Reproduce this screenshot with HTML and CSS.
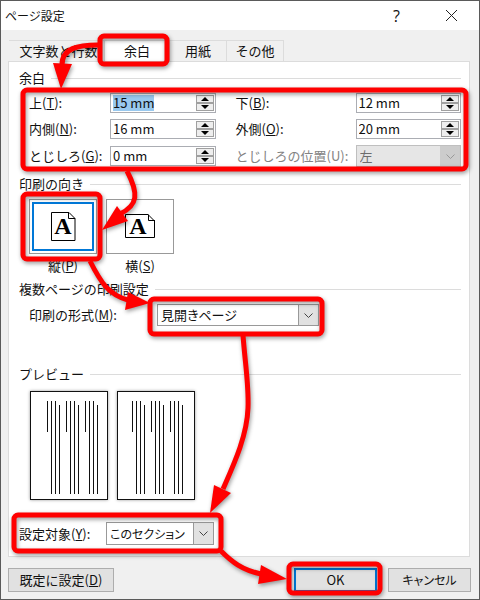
FILE: index.html
```html
<!DOCTYPE html>
<html lang="ja">
<head>
    <meta charset="UTF-8">
    <meta name="viewport" content="width=device-width, initial-scale=1.0">
    <title>ページ設定</title>
    <link rel="stylesheet" href="styles.css">
</head>
<body>
    <div class="dialog">
        <header class="titlebar">
            <h1>ページ設定</h1>
            <button class="title-btn" aria-label="ヘルプ">?</button>
            <button class="title-btn" aria-label="閉じる">
                <svg width="13" height="13" viewBox="0 0 13 13"><path d="M1 1L12 12M12 1L1 12" stroke="#222" fill="none"/></svg>
            </button>
        </header>

        <div class="tabs" role="tablist">
            <button class="tab first" role="tab">文字数と行数</button>
            <button class="tab active" role="tab" aria-selected="true">余白</button>
            <button class="tab" role="tab">用紙</button>
            <button class="tab" role="tab">その他</button>
        </div>

        <main class="panel">
            <h2>余白</h2>
            <div class="margins">
                <label for="top">上(<u>T</u>):</label>
                <div class="spinner">
                    <input type="text" id="top" value="15 mm">
                    <div class="arrows"><button class="up" aria-label="増やす"></button><button class="down" aria-label="減らす"></button></div>
                </div>
                <label class="right" for="bottom">下(<u>B</u>):</label>
                <div class="spinner">
                    <input type="text" id="bottom" value="12 mm">
                    <div class="arrows"><button class="up" aria-label="増やす"></button><button class="down" aria-label="減らす"></button></div>
                </div>

                <label for="inside">内側(<u>N</u>):</label>
                <div class="spinner">
                    <input type="text" id="inside" value="16 mm">
                    <div class="arrows"><button class="up" aria-label="増やす"></button><button class="down" aria-label="減らす"></button></div>
                </div>
                <label class="right" for="outside">外側(<u>O</u>):</label>
                <div class="spinner">
                    <input type="text" id="outside" value="20 mm">
                    <div class="arrows"><button class="up" aria-label="増やす"></button><button class="down" aria-label="減らす"></button></div>
                </div>

                <label for="gutter">とじしろ(<u>G</u>):</label>
                <div class="spinner">
                    <input type="text" id="gutter" value="0 mm">
                    <div class="arrows"><button class="up" aria-label="増やす"></button><button class="down" aria-label="減らす"></button></div>
                </div>
                <label class="right disabled" for="gutter-pos">とじしろの位置(U):</label>
                <div class="dropdown disabled">
                    <select id="gutter-pos" disabled><option>左</option></select>
                    <span class="chevron"><svg width="9" height="5" viewBox="0 0 9 5"><path d="M0.5 0.5L4.5 4.5L8.5 0.5"/></svg></span>
                </div>
            </div>

            <h2>印刷の向き</h2>
            <div class="orientation">
                <div class="orient">
                    <button class="thumb selected" id="portrait" aria-labelledby="portrait-label">
                        <svg width="25" height="31" viewBox="0 0 25 31">
                            <path d="M0.5 1.5H18L24 7.5V29.5H0.5ZM17.5 1.5V7.5H24" fill="#fff" stroke="#000"/>
                            <text class="glyph" x="12" y="23" text-anchor="middle">A</text>
                        </svg>
                    </button>
                    <span id="portrait-label">縦(<u>P</u>)</span>
                </div>
                <div class="orient">
                    <button class="thumb" id="landscape" aria-labelledby="landscape-label">
                        <svg width="31" height="31" viewBox="0 0 31 31">
                            <path d="M0.5 3.5H23L29.5 10V26.5H0.5ZM23.5 3.5V9.5H30" fill="#fff" stroke="#000"/>
                            <text class="glyph" x="13" y="23" text-anchor="middle">A</text>
                        </svg>
                    </button>
                    <span id="landscape-label">横(<u>S</u>)</span>
                </div>
            </div>

            <h2>複数ページの印刷設定</h2>
            <div class="pages">
                <label for="format">印刷の形式(<u>M</u>):</label>
                <div class="dropdown">
                    <select id="format"><option>見開きページ</option></select>
                    <span class="chevron"><svg width="9" height="5" viewBox="0 0 9 5"><path d="M0.5 0.5L4.5 4.5L8.5 0.5"/></svg></span>
                </div>
            </div>

            <h2 class="preview-title">プレビュー</h2>
            <div class="preview">
                <svg class="sheet" width="78" height="109" viewBox="0 0 78 109">
                    <rect x="0.5" y="0.5" width="77" height="108" fill="#fff" stroke="#111"/>
                    <path d="M17.5 10V41M21.5 10V103M25.5 10V103M29.5 14V103M36.5 10V41M40.5 10V103M44.5 10V103M48.5 14V103M55.5 10V41M59.5 10V103M63.5 10V103M67.5 14V103" stroke="#111"/>
                </svg>
                <svg class="sheet" width="78" height="109" viewBox="0 0 78 109">
                    <rect x="0.5" y="0.5" width="77" height="108" fill="#fff" stroke="#111"/>
                    <path d="M15.5 10V41M19.5 10V103M23.5 10V103M27.5 14V103M34.5 10V41M38.5 10V103M42.5 10V103M46.5 14V103M53.5 10V41M57.5 10V103M61.5 10V103M65.5 14V103" stroke="#111"/>
                </svg>
            </div>

            <div class="target">
                <label for="apply">設定対象(<u>Y</u>):</label>
                <div class="dropdown">
                    <select id="apply"><option>このセクション</option></select>
                    <span class="chevron"><svg width="9" height="5" viewBox="0 0 9 5"><path d="M0.5 0.5L4.5 4.5L8.5 0.5"/></svg></span>
                </div>
            </div>
        </main>

        <footer class="footer">
            <button class="btn default">既定に設定(<u>D</u>)</button>
            <button class="btn ok">OK</button>
            <button class="btn cancel">キャンセル</button>
        </footer>

        <!-- red marks that show the order of the steps -->
        <svg class="guide" viewBox="0 0 480 600" aria-hidden="true">
            <g class="marks">
                <rect x="100" y="36" width="67" height="28" rx="4"/>
                <rect x="23" y="90" width="443" height="79" rx="4"/>
                <rect x="23" y="194" width="77" height="65" rx="4"/>
                <rect x="150" y="299" width="172" height="35" rx="4"/>
                <rect x="14" y="515" width="207" height="36" rx="4"/>
                <rect x="289" y="564" width="91" height="29" rx="4"/>
            </g>
            <g class="lines">
                <path d="M98 45C78 45 62 48 62 65"/>
                <path d="M127 171C139 194 138 205 120 214"/>
                <path d="M90 261C101 283 109 295 128 300"/>
                <path d="M243 335C245 363 249 385 248 408C247 436 234 464 223 489"/>
                <path d="M221 551C232 562 242 570 261 574"/>
            </g>
            <g class="heads">
                <path d="M61 89L53 63L72 64Z"/>
                <path d="M102 230L117 206L128 221Z"/>
                <path d="M150 303L128 292L125 310Z"/>
                <path d="M210 513L214 485L231 493Z"/>
                <path d="M287 579L261 565L258 584Z"/>
            </g>
        </svg>
    </div>
    <script>
        // the first field starts focused with its value selected
        const topInput = document.getElementById('top');
        topInput.focus();
        topInput.select();
    </script>
</body>
</html>
```
FILE: styles.css
```css
*,
*::before,
*::after{
    padding: 0;
    margin: 0;
    box-sizing: border-box;
}
body{
    font-family: "Noto Sans CJK JP", sans-serif;
    font-size: 13px;
    line-height: 16px;
    color: #111111;
}
button,
input,
select{
    font: inherit;
    color: inherit;
    border: none;
    outline: none;
    border-radius: 0;
    background: none;
}
svg{
    display: block;
}
.dialog{
    position: relative;
    min-height: 100vh;
    background-color: #f0f0f0;
    border: 1px solid #5a5a5a;
    display: flex;
    flex-direction: column;
}
.titlebar{
    height: 29px;
    background-color: #ffffff;
    padding-left: 4px;
    display: flex;
    align-items: center;
}
.titlebar h1{
    flex: 1;
    font-size: 12px;
    font-weight: 400;
}
.title-btn{
    width: 55px;
    height: 29px;
    font-family: "Open Sans", sans-serif;
    font-size: 16px;
    display: grid;
    place-items: center;
}

/* tabs */
.tabs{
    display: flex;
    margin: 10px 8px 0 8px;
}
.tab{
    height: 21px;
    width: 57px;
    border-top: 1px solid #dcdcdc;
    border-right: 1px solid #dcdcdc;
    white-space: nowrap;
}
.tab.first{
    width: 96px;
    padding-left: 4px;
}
.tab.active{
    width: 65px;
    background-color: #ffffff;
}
.panel{
    flex: 1;
    margin: 0 9px 0 7px;
    padding: 8px 8px 9px 10px;
    background-color: #ffffff;
    border: 1px solid #dcdcdc;
}
h2{
    display: flex;
    align-items: center;
    gap: 6px;
    height: 16px;
    font-size: 13px;
    font-weight: 400;
}
h2::after{
    content: "";
    flex: 1;
    height: 1px;
    background-color: #dcdcdc;
}

/* margins */
.margins{
    display: grid;
    grid-template-columns: 81px 1fr 140px 1fr;
    row-gap: 6px;
    align-items: center;
    padding-left: 10px;
    margin: 7px 0 9px;
}
.margins .right{
    padding-left: 20px;
}
label.disabled{
    color: #838383;
}
.spinner{
    display: flex;
    height: 20px;
    border: 1px solid #abadb3;
    background-color: #ffffff;
    padding: 1px;
}
.spinner input{
    flex: 1;
    width: 0;
    padding-left: 1px;
}
.spinner input::selection{
    background-color: #99c9ef;
    color: #111111;
}
.arrows{
    width: 18px;
    display: grid;
    grid-template-rows: 1fr 1fr;
}
.arrows button{
    background-color: #eeeeee;
    border: 1px solid #a0a0a0;
    display: grid;
    place-items: center;
}
.arrows button::before{
    content: "";
    border-left: 4px solid transparent;
    border-right: 4px solid transparent;
}
.arrows .up::before{
    border-bottom: 4px solid #000000;
}
.arrows .down::before{
    border-top: 4px solid #000000;
}
.dropdown{
    display: flex;
    height: 22px;
    border: 1px solid #999999;
    background-color: #ffffff;
}
.dropdown select{
    flex: 1;
    width: 0;
    appearance: none;
    padding-left: 3px;
    opacity: 1;
    font-feature-settings: "palt";
}
.chevron{
    width: 20px;
    display: grid;
    place-items: center;
    background-color: #e1e1e1;
    border-left: 1px solid #999999;
}
.chevron path{
    fill: none;
    stroke: #444444;
}
.dropdown.disabled{
    background-color: #e6e6e6;
    border-color: #bfbfbf;
    color: #6d6d6d;
}
.dropdown.disabled .chevron{
    background-color: #cccccc;
    border-left-color: #cccccc;
}
.dropdown.disabled .chevron path{
    stroke: #999999;
}

/* orientation */
.orientation{
    display: flex;
    gap: 9px;
    padding-left: 10px;
    margin: 7px 0;
}
.orient{
    display: grid;
    justify-items: center;
    row-gap: 4px;
}
.thumb{
    width: 68px;
    height: 55px;
    border: 1px solid #999999;
    background-color: #ffffff;
    display: grid;
    place-items: center;
}
.thumb.selected{
    box-shadow: inset 0 0 0 2px #ffffff, inset 0 0 0 4px #0078d7;
}
.glyph{
    font-family: "Liberation Serif", serif;
    font-size: 24px;
    font-weight: 700;
}

.pages{
    display: flex;
    align-items: center;
    padding-left: 10px;
    margin-top: 7px;
}
.pages label{
    width: 128px;
}
.pages .dropdown{
    width: 162px;
}
.preview-title{
    margin-top: 40px;
}
.preview{
    display: flex;
    gap: 9px;
    padding-left: 11px;
    margin: 9px 0 22px;
}
.sheet{
    box-shadow: 0 0 3px #999999;
}
.target{
    display: flex;
    align-items: center;
}
.target label{
    width: 87px;
}
.target .dropdown{
    width: 108px;
    height: 23px;
    font-size: 12px;
}

.footer{
    display: flex;
    gap: 11px;
    padding: 11px 8px 7px 7px;
}
.btn{
    height: 24px;
    width: 83px;
    background-color: #e1e1e1;
    border: 1px solid #adadad;
}
.btn.default{
    width: 106px;
    margin-right: auto;
}
.btn.ok{
    border: 2px solid #0078d7;
}
.btn.cancel{
    font-size: 12px;
    font-feature-settings: "palt";
}

/* step marks */
.guide{
    position: absolute;
    top: -1px;
    left: -1px;
    width: 480px;
    height: 600px;
    pointer-events: none;
    filter: drop-shadow(1px 2px 2px rgba(0,0,0,0.4));
}
.marks,
.lines{
    fill: none;
    stroke: #ff0000;
    stroke-width: 5px;
}
.heads{
    fill: #ff0000;
}
```
